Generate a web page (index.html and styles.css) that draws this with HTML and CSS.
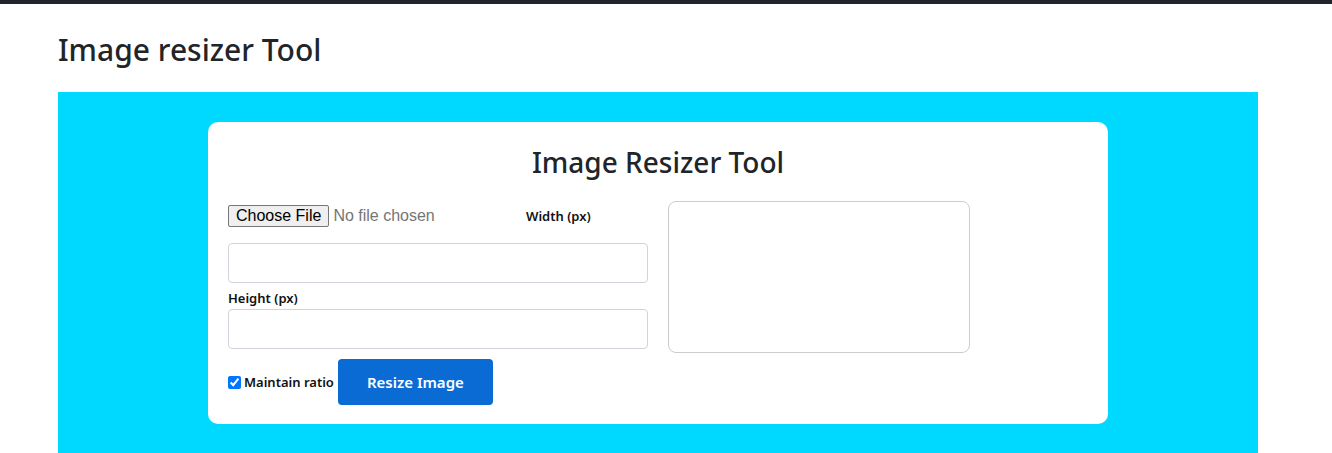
FILE: index.html
```html
<!DOCTYPE html>
<html lang="en">
<head>
  <meta charset="UTF-8" />
  <meta name="viewport" content="width=device-width, initial-scale=1.0"/>
  <title>Image resizer Tool</title>
  <link rel="stylesheet" href="styles.css">
</head>
<body>
  <div class="page">
    <h1 class="page-title">Image resizer Tool</h1>

    <section class="tool-wrap">
      <div class="card">
        <h2>Image Resizer Tool</h2>
        <div class="tool-row">
          <form class="controls" id="resizeForm">
            <div class="file-line">
              <input type="file" id="fileInput" accept="image/*" />
              <label for="widthInput" class="inline-label">Width (px)</label>
            </div>
            <input type="number" id="widthInput" class="field" />
            <label for="heightInput" class="field-label">Height (px)</label>
            <input type="number" id="heightInput" class="field" />
            <div class="action-line">
              <label class="ratio"><input type="checkbox" id="keepRatio" checked /> Maintain ratio</label>
              <button type="submit" class="resize-btn">Resize Image</button>
            </div>
          </form>
          <div class="preview" id="preview"></div>
        </div>
      </div>
    </section>
  </div>
</body>
</html>
```

FILE: styles.css
```css
* {
  box-sizing: border-box;
}

body {
  margin: 0;
  border-top: 4px solid #212529;
  background: #fff;
  color: #212529;
  font-family: 'Noto Sans', 'Open Sans', sans-serif;
}

.page {
  width: 1200px;
  margin-left: 58px;
}

.page-title {
  margin: 27px 0 23px;
  font-size: 30px;
  font-weight: 500;
  line-height: 38px;
}

.tool-wrap {
  background: #00d9ff;
  padding: 30px 0 40px;
}

.card {
  width: 900px;
  margin: 0 auto;
  background: #fff;
  border-radius: 10px;
  padding: 23px 20px 19px;
}

.card h2 {
  margin: 0 0 22px;
  text-align: center;
  font-size: 28px;
  font-weight: 500;
  line-height: 34px;
}

.tool-row {
  display: flex;
  gap: 20px;
  align-items: flex-start;
}

.controls {
  width: 420px;
}

.file-line {
  display: flex;
  align-items: center;
  padding-top: 3px;
  height: 26px;
  margin-bottom: 16px;
}

.file-line input[type="file"] {
  width: 298px;
  font-family: 'Liberation Sans', Arial, sans-serif;
  font-size: 16px;
  color: #757575;
}

.file-line input[type="file"]::file-selector-button {
  font-family: 'Liberation Sans', Arial, sans-serif;
  font-size: 16px;
  color: #000;
  padding: 1px 7px;
  margin-right: 4px;
  border: 1px solid #767676;
  border-radius: 2px;
  background: #efefef;
}

.inline-label,
.field-label,
.ratio {
  font-family: 'Noto Sans', 'Open Sans', sans-serif;
  font-size: 13px;
  font-weight: 600;
  color: #111;
}

.field-label {
  display: block;
  line-height: 18px;
  margin: 6px 0 2px;
}

.field {
  display: block;
  width: 100%;
  height: 40px;
  padding: 6px 10px;
  border: 1px solid #d2d2dc;
  border-radius: 4px;
  font-size: 15px;
}

.action-line {
  display: flex;
  align-items: center;
  gap: 4px;
  margin-top: 10px;
}

.ratio {
  display: flex;
  align-items: center;
  gap: 3px;
}

.ratio input {
  margin: 0;
  width: 13px;
  height: 13px;
}

.resize-btn {
  width: 155px;
  height: 46px;
  background: #0b6bd5;
  color: #fff;
  border: none;
  border-radius: 4px;
  font-family: 'Noto Sans', 'Open Sans', sans-serif;
  font-size: 15px;
  font-weight: 600;
  cursor: pointer;
}

.resize-btn:hover {
  background: #0858b0;
}

.preview {
  width: 302px;
  height: 152px;
  border: 1px solid #cccccc;
  border-radius: 8px;
}
```
